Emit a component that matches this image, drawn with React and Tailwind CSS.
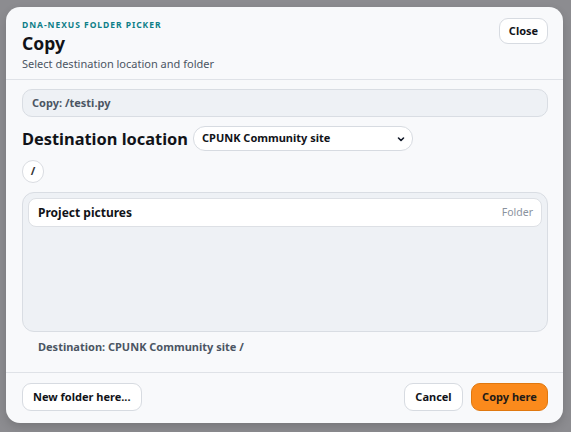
import React from "react";

const font = { fontFamily: '"Noto Sans", "Open Sans", sans-serif' };

function Chevron() {
  return (
    <svg width="10" height="10" viewBox="0 0 10 10" fill="none" stroke="#111827" strokeWidth="1.6" strokeLinecap="round" strokeLinejoin="round">
      <path d="M2.5 4 L5 6.5 L7.5 4" />
    </svg>
  );
}

export default function App() {
  return (
    <div className="w-[571px] h-[432px] bg-[#8c8c90] pt-[7px] pl-[6px]" style={font}>
      <div className="w-[557px] h-[416px] bg-[#f8f9fb] rounded-[14px] flex flex-col shadow-[0_4px_10px_rgba(0,0,0,0.15)]">
        {/* header */}
        <div className="flex justify-between items-start pl-[16px] pr-[15px] pt-[11px] h-[73px] border-b border-[#dfe2e7]">
          <div className="flex flex-col">
            <div className="text-[8.5px] font-bold tracking-[0.113em] text-[#0e7f88] leading-[14px]">DNA-NEXUS FOLDER PICKER</div>
            <div className="text-[17.5px] font-bold text-[#111318] leading-[24px] -mt-[1px]">Copy</div>
            <div className="text-[11px] text-[#4b5563] leading-[16px] mt-[1px]">Select destination location and folder</div>
          </div>
          <button className="h-[26px] w-[49px] rounded-[9px] border border-[#d7dbe1] bg-white text-[11px] font-bold text-[#111318]">Close</button>
        </div>

        {/* body */}
        <div className="flex flex-col px-[16px] pr-[15px] pt-[9px] h-[293px] border-b border-[#dfe2e7]">
          <div className="h-[28px] rounded-[10px] border border-[#d9dde3] bg-[#eef1f5] flex items-center px-[9px] text-[11px] font-bold text-[#4b5563]">Copy: /testi.py</div>

          <div className="flex items-center gap-[5px] mt-[9px]">
            <div className="text-[16.4px] font-bold text-[#111318] leading-[25px]">Destination location</div>
            <div className="w-[220px] h-[25px] rounded-[12px] border border-[#d7dbe1] bg-white flex items-center justify-between pl-[8px] pr-[6px]">
              <span className="text-[11px] font-bold text-[#111318]">CPUNK Community site</span>
              <Chevron />
            </div>
          </div>

          <div className="mt-[9px] w-[22px] h-[23px] rounded-full border border-[#dadde2] bg-white flex items-center justify-center text-[11px] font-bold text-[#333]">/</div>

          <div className="mt-[9px] h-[140px] rounded-[12px] border border-[#d9dde3] bg-[#eef1f5] p-[5px]">
            <div className="h-[29px] rounded-[8px] border border-[#dde0e5] bg-white flex items-center justify-between pl-[9px] pr-[8px]">
              <span className="text-[12px] font-bold text-[#111318]">Project pictures</span>
              <span className="text-[10.5px] text-[#8a929e]">Folder</span>
            </div>
          </div>

          <div className="mt-[7px] pl-[16px] text-[11px] font-bold text-[#4b5563] leading-[16px]">Destination: CPUNK Community site /</div>
        </div>

        {/* footer */}
        <div className="flex items-center justify-between pl-[16px] pr-[15px] pt-[10px]">
          <button className="h-[28px] px-[10px] rounded-[9px] border border-[#d7dbe1] bg-white text-[11px] font-bold text-[#111318]">New folder here...</button>
          <div className="flex gap-[8px]">
            <button className="h-[28px] w-[59px] rounded-[9px] border border-[#d7dbe1] bg-white text-[11px] font-bold text-[#111318]">Cancel</button>
            <button className="h-[28px] w-[77px] rounded-[9px] border border-[#e0780f] bg-[#fb8a1c] text-[11px] font-bold text-[#1f1a17]">Copy here</button>
          </div>
        </div>
      </div>
    </div>
  );
}
